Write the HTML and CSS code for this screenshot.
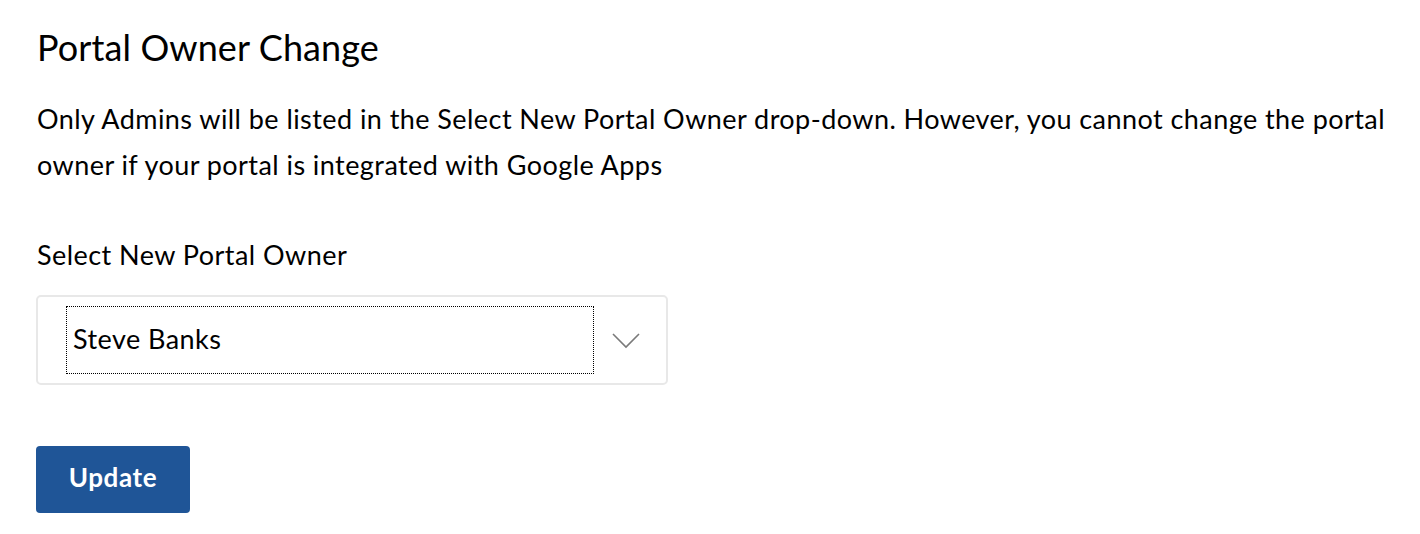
FILE: index.html
```html
<!DOCTYPE html>
<html>
<head>
<meta charset="utf-8">
<link rel="stylesheet" href="styles.css">
</head>
<body>
<div class="page">
  <h1 class="title">Portal Owner Change</h1>
  <p class="desc">Only Admins will be listed in the Select New Portal Owner drop-down. However, you cannot change the portal owner if your portal is integrated with Google Apps</p>
  <div class="label">Select New Portal Owner</div>
  <div class="select">
    <div class="select-value">Steve Banks</div>
    <svg class="chevron" width="28" height="16" viewBox="0 0 28 16"><path d="M1 1 L14 14 L27 1" fill="none" stroke="#7a7a7a" stroke-width="1.6"/></svg>
  </div>
  <button class="btn">Update</button>
</div>
</body>
</html>
```
FILE: styles.css
```css
html, body { margin: 0; padding: 0; background: #fff; }
body { font-family: Lato, "Noto Sans", sans-serif; color: #000; }
.page { padding: 25px 0 0 37px; display: flex; flex-direction: column; align-items: flex-start; }
.title { font-size: 36px; font-weight: 400; margin: 0; line-height: 44px; letter-spacing: 0.1px; }
.desc { font-size: 27px; line-height: 46px; margin: 27px 0 0 0; width: 1375px; letter-spacing: 0.44px; }
.label { font-size: 27px; line-height: 32px; margin-top: 51px; letter-spacing: 0.45px; }
.select { margin-top: 24px; margin-left: -1px; width: 632px; height: 90px; border: 2px solid #e8e8e8; border-radius: 5px; box-sizing: border-box; display: flex; align-items: center; }
.select-value { margin-left: 28px; width: 528px; height: 68px; border: 1px dotted #000; font-size: 27px; letter-spacing: 0.45px; display: flex; align-items: center; padding: 0 0 4px 6px; box-sizing: border-box; }
.chevron { margin-left: 18px; margin-top: 2px; }
.btn { margin-top: 61px; margin-left: -1px; width: 154px; height: 67px; background: #1f5597; color: #fff; border: none; border-radius: 4px; font-family: Lato, sans-serif; font-size: 26px; font-weight: 700; letter-spacing: 0.6px; padding: 0 0 5px 0; }
```
